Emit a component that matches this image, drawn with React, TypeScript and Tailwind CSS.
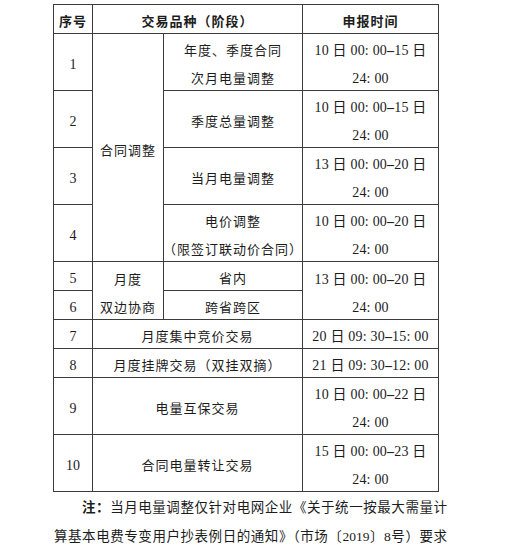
import React from "react";

const cell =
  "flex flex-col items-center justify-center pt-[6px] border-r border-b border-[#3c3c3c] whitespace-nowrap leading-[28px]";
const txt = "tracking-[1px]";
const num = "text-[14px]";
const tm = "text-[14px] tracking-[0.2px]";

function Dash() {
  return <span className="font-bold">–</span>;
}

function Time({ a, b }: { a: string; b: string }) {
  return (
    <>
      <div className={tm}>
        {a.split("–")[0]}
        <Dash />
        {a.split("–")[1]}
      </div>
      {b && <div className={tm}>{b}</div>}
    </>
  );
}

export default function App() {
  return (
    <div className="w-[505px] h-[545px] bg-white overflow-hidden font-['Liberation_Serif','Noto_Sans_CJK_SC',serif] text-[13px] text-[#1c1c1c]">
      <div className="pt-[4px] pl-[53px]">
        <div className="grid w-max grid-cols-[39px_71px_139px_136px] grid-rows-[29px_57px_57px_57px_57px_29px_29px_29px_29px_57px_57px] border-t border-l border-[#3c3c3c]">
          {/* header */}
          <div className={`${cell} font-bold ${txt}`}>序号</div>
          <div className={`${cell} col-span-2 font-bold ${txt}`}>交易品种（阶段）</div>
          <div className={`${cell} font-bold ${txt}`}>申报时间</div>

          {/* row 1 */}
          <div className={`${cell} ${num}`}>1</div>
          <div className={`${cell} row-span-4 ${txt}`}>合同调整</div>
          <div className={`${cell} ${txt}`}>
            <div>年度、季度合同</div>
            <div>次月电量调整</div>
          </div>
          <div className={cell}>
            <Time a="10 日 00: 00–15 日" b="24: 00" />
          </div>

          {/* row 2 */}
          <div className={`${cell} ${num}`}>2</div>
          <div className={`${cell} ${txt}`}>季度总量调整</div>
          <div className={cell}>
            <Time a="10 日 00: 00–15 日" b="24: 00" />
          </div>

          {/* row 3 */}
          <div className={`${cell} ${num}`}>3</div>
          <div className={`${cell} ${txt}`}>当月电量调整</div>
          <div className={cell}>
            <Time a="13 日 00: 00–20 日" b="24: 00" />
          </div>

          {/* row 4 */}
          <div className={`${cell} ${num}`}>4</div>
          <div className={`${cell} ${txt}`}>
            <div>电价调整</div>
            <div>（限签订联动价合同）</div>
          </div>
          <div className={cell}>
            <Time a="10 日 00: 00–20 日" b="24: 00" />
          </div>

          {/* rows 5-6 */}
          <div className={`${cell} ${num}`}>5</div>
          <div className={`${cell} row-span-2 ${txt}`}>
            <div>月度</div>
            <div>双边协商</div>
          </div>
          <div className={`${cell} ${txt}`}>省内</div>
          <div className={`${cell} row-span-2`}>
            <Time a="13 日 00: 00–20 日" b="24: 00" />
          </div>
          <div className={`${cell} ${num}`}>6</div>
          <div className={`${cell} ${txt}`}>跨省跨区</div>

          {/* row 7 */}
          <div className={`${cell} ${num}`}>7</div>
          <div className={`${cell} col-span-2 ${txt}`}>月度集中竞价交易</div>
          <div className={cell}>
            <div className={tm}>
              20 日 09: 30<Dash />15: 00
            </div>
          </div>

          {/* row 8 */}
          <div className={`${cell} ${num}`}>8</div>
          <div className={`${cell} col-span-2 ${txt}`}>月度挂牌交易（双挂双摘）</div>
          <div className={cell}>
            <div className={tm}>
              21 日 09: 30<Dash />12: 00
            </div>
          </div>

          {/* row 9 */}
          <div className={`${cell} ${num}`}>9</div>
          <div className={`${cell} col-span-2 ${txt}`}>电量互保交易</div>
          <div className={cell}>
            <Time a="10 日 00: 00–22 日" b="24: 00" />
          </div>

          {/* row 10 */}
          <div className={`${cell} ${num}`}>10</div>
          <div className={`${cell} col-span-2 ${txt}`}>合同电量转让交易</div>
          <div className={cell}>
            <Time a="15 日 00: 00–23 日" b="24: 00" />
          </div>
        </div>
      </div>

      <div className="mt-[1px] ml-[54px] w-[393px] text-[13.5px] leading-[29px] text-[#1c1c1c]">
        <div className="whitespace-nowrap text-justify [text-align-last:justify] indent-[28px]">
          <span className="font-bold">注：</span>当月电量调整仅针对电网企业《关于统一按最大需量计
        </div>
        <div className="whitespace-nowrap text-justify [text-align-last:justify]">
          算基本电费专变用户抄表例日的通知》（市场〔2019〕8号）要求
        </div>
      </div>
    </div>
  );
}
